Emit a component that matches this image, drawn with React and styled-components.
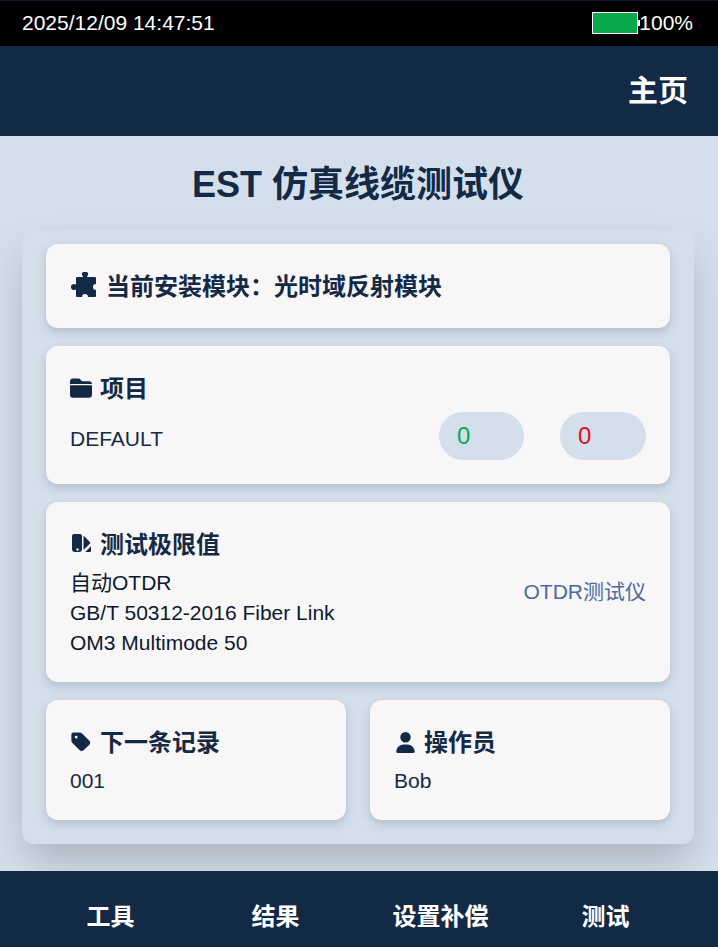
import React from "react";
import styled, { createGlobalStyle } from "styled-components";
import { FaFolderClosed, FaTag, FaUser } from "react-icons/fa6";

const Global = createGlobalStyle`
  html, body { margin: 0; padding: 0; }
  body { font-family: "Liberation Sans", "Noto Sans CJK SC", sans-serif; background: #d4dfec; }
  * { box-sizing: border-box; }
`;

const Page = styled.div`
  width: 718px; height: 947px; display: flex; flex-direction: column;
  background: #d4dfec; overflow: hidden;
`;
const StatusBar = styled.div`
  height: 46px; flex: none; background: #000; color: #fff; display: flex;
  align-items: center; justify-content: space-between; padding: 0 25px 1px 22px;
  font-size: 21px; border-top: 1px solid #0d1a2e;
`;
const BatteryGroup = styled.div`display: flex; align-items: center;`;
const Battery = styled.div`
  position: relative; width: 46px; height: 22px; border: 1px solid #fff; background: #07a94b;
  &::after { content: ""; position: absolute; right: -3px; top: 7px; width: 2px; height: 6px; background: #fff; }
`;
const Percent = styled.span`margin-left: 1px;`;
const Header = styled.header`
  height: 90px; flex: none; background: #132a46; color: #fff; display: flex;
  align-items: center; justify-content: flex-end; padding: 0 30px 6px;
  font-size: 30px; font-weight: 700;
`;
const Title = styled.h1`
  margin: 0; height: 94px; flex: none; display: flex; align-items: center; justify-content: center;
  font-size: 36px; font-weight: 700; color: #132a46; padding: 0 2px 4px 0;
`;
const Panel = styled.main`
  margin: 0 24px 0 22px; padding: 14px 24px 24px; background: #d4dfec; border-radius: 12px;
  box-shadow: 0 20px 40px -6px rgba(0, 0, 0, 0.22); display: flex; flex-direction: column; gap: 18px;
  height: 614px; flex: none;
`;
const Card = styled.section`
  background: #f9f6f8; border-radius: 12px; box-shadow: 0 4px 10px rgba(19, 42, 70, 0.18);
  padding: ${p => p.$pad}; height: ${p => p.$h}px; color: #132a46;
`;
const ModuleTitle = styled.div`
  display: flex; align-items: center; gap: 9px; height: 44px; font-size: 24px; font-weight: 700;
  padding-left: 1px;
`;
const PuzzleIcon = styled.svg`
  width: 26px; height: 26px; flex: none; margin-top: -2px; fill: currentColor;
`;
const IconBox = styled.span`
  width: 22px; height: 22px; flex: none; display: flex; align-items: center; justify-content: center;
`;
const TitleText = styled.span`position: relative; top: -2px;`;
const CardTitle = styled.div`
  display: flex; align-items: center; gap: 8px; font-size: 24px; font-weight: 700; height: 34px;
  margin-top: ${p => p.$mt || 0}px; color: #132a46;
`;
const ProjectRow = styled.div`display: flex; align-items: center; margin-top: 7px;`;
const Value = styled.div`font-size: 21px; color: #132a46; line-height: 30px; margin-top: ${p => p.$mt || 0}px;`;
const Spacer = styled.div`flex: 1;`;
const Pill = styled.div`
  width: ${p => p.$w}px; height: 48px; border-radius: 24px; background: #d4dfec; color: ${p => p.$color};
  font-size: 24px; display: flex; align-items: center; padding-left: 18px; margin-left: ${p => p.$ml}px;
`;
const LimitRow = styled.div`display: flex; align-items: flex-start; justify-content: space-between; margin-top: 7px;`;
const LimitLines = styled.div`font-size: 21px; line-height: 30px; color: #0a1a2e;`;
const LimitLink = styled.div`font-size: 21px; color: #4a6aa0; line-height: 30px; margin-top: 9px;`;
const Split = styled.div`display: grid; grid-template-columns: 300px 300px; gap: 24px;`;
const Footer = styled.footer`
  margin-top: 27px; flex: 1; background: #132a46; display: grid;
  grid-template-columns: 165px 165px 165px 165px; padding: 0 29px 0 28px; align-items: center;
`;
const Tab = styled.div`
  color: #fff; font-size: 24px; font-weight: 700; text-align: center; padding-top: 10px;
`;

const Puzzle = () => (
  <PuzzleIcon viewBox="0 0 26 26">
    <path d="M6 5H11.5C12 5 12 4.5 11.6 4A3 3 0 1 1 16.4 4C16 4.5 16 5 16.5 5H24Q25 5 25 6V12A3 3 0 0 0 25 18V24Q25 25 24 25H17A3 3 0 0 0 11 25H6Q5 25 5 24V18C5 17.5 4.5 17.5 4 17.8A3 3 0 1 1 4 12.2C4.5 12.5 5 12.5 5 12V6Q5 5 6 5Z" />
  </PuzzleIcon>
);
const Swatch = () => (
  <svg width="22" height="22" viewBox="0 1 22 22" fill="currentColor">
    <path fillRule="evenodd" d="M4 2H10Q12 2 12 4V17Q12 20 9 20H5Q2 20 2 17V4Q2 2 4 2ZM7.5 16.3A1.2 1.2 0 1 0 7.5 18.7A1.2 1.2 0 1 0 7.5 16.3Z" />
    <path d="M13.5 4.2Q14 4 14.6 4.6L20 10.2Q20.6 10.9 20 11.5L13.5 18Z" />
    <path d="M15.2 20L21 14.2V19Q21 20 20 20Z" />
  </svg>
);

export default function App() {
  return (
    <Page>
      <Global />
      <StatusBar>
        <span>2025/12/09 14:47:51</span>
        <BatteryGroup><Battery /><Percent>100%</Percent></BatteryGroup>
      </StatusBar>
      <Header>主页</Header>
      <Title>EST 仿真线缆测试仪</Title>
      <Panel>
        <Card $h={84} $pad="20px 24px">
          <ModuleTitle><Puzzle /><TitleText>当前安装模块：光时域反射模块</TitleText></ModuleTitle>
        </Card>
        <Card $h={138} $pad="26px 24px 0">
          <CardTitle $mt={-1}><IconBox><FaFolderClosed size={22} /></IconBox><TitleText>项目</TitleText></CardTitle>
          <ProjectRow>
            <Value $mt={6}>DEFAULT</Value>
            <Spacer />
            <Pill $w={85} $color="#07a94b" $ml={0}>0</Pill>
            <Pill $w={86} $color="#ef0a24" $ml={36}>0</Pill>
          </ProjectRow>
        </Card>
        <Card $h={180} $pad="25px 24px 0">
          <CardTitle><IconBox><Swatch /></IconBox><TitleText>测试极限值</TitleText></CardTitle>
          <LimitRow>
            <LimitLines>自动OTDR<br />GB/T 50312-2016 Fiber Link<br />OM3 Multimode 50</LimitLines>
            <LimitLink>OTDR测试仪</LimitLink>
          </LimitRow>
        </Card>
        <Split>
          <Card $h={120} $pad="25px 24px 0">
            <CardTitle><IconBox><FaTag size={22} /></IconBox><TitleText>下一条记录</TitleText></CardTitle>
            <Value $mt={7}>001</Value>
          </Card>
          <Card $h={120} $pad="25px 24px 0">
            <CardTitle><IconBox><FaUser size={21} /></IconBox><TitleText>操作员</TitleText></CardTitle>
            <Value $mt={7}>Bob</Value>
          </Card>
        </Split>
      </Panel>
      <Footer>
        <Tab>工具</Tab><Tab>结果</Tab><Tab>设置补偿</Tab><Tab>测试</Tab>
      </Footer>
    </Page>
  );
}
